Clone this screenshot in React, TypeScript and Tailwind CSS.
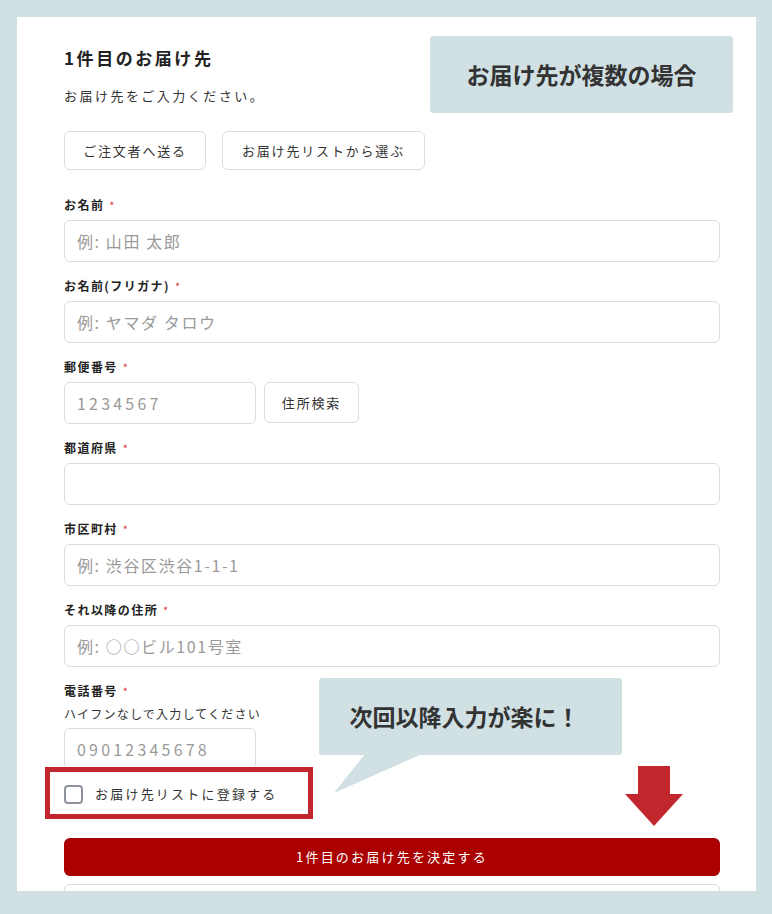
import React from "react";

const font = { fontFamily: '"Noto Sans CJK JP", "Noto Sans", sans-serif' };

function Label({ text }: { text: string }) {
  return (
    <div className="flex items-center h-[18px] text-[12px] font-bold text-[#222] tracking-[0.12em] leading-[18px]">
      <span>{text}</span>
      <span className="ml-[5px] text-[#e0393e] text-[11px] font-normal">*</span>
    </div>
  );
}

function Input({ placeholder, w, digits }: { placeholder?: string; w?: string; digits?: boolean }) {
  return (
    <div
      className={`mt-[6px] h-[42px] ${w ?? "w-full"} rounded-[6px] border border-[#dcdcdc] bg-white flex items-center px-[12px] text-[16px] ${digits ? "tracking-[0.2em]" : "tracking-[0.1em]"} text-[#9a9a9a]`}
    >
      {placeholder}
    </div>
  );
}

export default function App() {
  return (
    <div className="w-[772px] h-[914px] bg-[#d0e0e3] pt-[17px] pl-[17px] overflow-hidden" style={font}>
      <div className="relative w-[739px] h-[874px] bg-white overflow-hidden pl-[47px] pr-[36px] pt-[29px]">
        <div className="text-[17px] font-bold leading-[24px] tracking-[0.15em] text-[#222]">1件目のお届け先</div>
        <div className="mt-[16px] text-[13px] leading-[20px] tracking-[0.19em] text-[#333]">お届け先をご入力ください。</div>
        <div className="mt-[25px] flex gap-[16px]">
          <div className="h-[39px] w-[142px] rounded-[6px] border border-[#dcdcdc] flex items-center justify-center text-[13px] tracking-[0.14em] text-[#333]">
            ご注文者へ送る
          </div>
          <div className="h-[39px] w-[203px] rounded-[6px] border border-[#dcdcdc] flex items-center justify-center text-[13px] tracking-[0.14em] text-[#333]">
            お届け先リストから選ぶ
          </div>
        </div>

        <div className="mt-[26px] flex flex-col gap-[15px]">
          <div>
            <Label text="お名前" />
            <Input placeholder="例: 山田 太郎" />
          </div>
          <div>
            <Label text="お名前(フリガナ)" />
            <Input placeholder="例: ヤマダ タロウ" />
          </div>
          <div>
            <Label text="郵便番号" />
            <div className="flex gap-[8px] items-start">
              <Input placeholder="1234567" w="w-[192px]" digits />
              <div className="mt-[6px] h-[41px] w-[95px] rounded-[6px] border border-[#dcdcdc] flex items-center justify-center text-[13px] tracking-[0.14em] text-[#333]">
                住所検索
              </div>
            </div>
          </div>
          <div>
            <Label text="都道府県" />
            <Input />
          </div>
          <div>
            <Label text="市区町村" />
            <Input placeholder="例: 渋谷区渋谷1-1-1" />
          </div>
          <div>
            <Label text="それ以降の住所" />
            <Input placeholder="例: ○○ビル101号室" />
          </div>
          <div>
            <Label text="電話番号" />
            <div className="mt-[5px] h-[18px] leading-[18px] text-[12px] tracking-[0.1em] text-[#333]">ハイフンなしで入力してください</div>
            <div className="-mt-[1px]">
              <Input placeholder="09012345678" w="w-[192px]" digits />
            </div>
          </div>
        </div>

        <div className="relative mt-[4px] h-[40px] flex items-center gap-[12px]">
          <div className="w-[19px] h-[19px] rounded-[4px] border-2 border-[#8d939c] bg-white" />
          <span className="text-[13px] tracking-[0.17em] text-[#333]">お届け先リストに登録する</span>
          <div className="absolute left-[-19px] top-[-7px] w-[268px] h-[52px] border-[5px] border-[#c1272d]" />
        </div>

        <div className="mt-[24px] h-[38px] rounded-[6px] bg-[#aa0000] flex items-center justify-center text-[13px] tracking-[0.17em] text-white">
          1件目のお届け先を決定する
        </div>
        <div className="mt-[8px] h-[42px] rounded-[6px] border border-[#dcdcdc]" />

        <div className="absolute left-[413px] top-[19px] w-[303px] h-[77px] rounded-[3px] bg-[#d0e0e3] flex items-center justify-center text-[23px] font-bold text-[#333]">
          お届け先が複数の場合
        </div>

        <div className="absolute left-[302px] top-[661px] w-[303px] h-[77px] rounded-[3px] bg-[#d0e0e3] flex items-center justify-center pr-[12px] text-[23px] font-bold text-[#333]">
          次回以降入力が楽に！
        </div>
        <svg className="absolute left-[310px] top-[737px]" width="100" height="40" viewBox="0 0 100 40">
          <polygon points="38,0 95,0 7,39" fill="#d0e0e3" />
        </svg>

        <svg className="absolute left-[608px] top-[749px]" width="58" height="61" viewBox="0 0 58 61">
          <polygon points="13,0 45,0 45,28 58,28 29,60 0,28 13,28" fill="#c1272d" strokeLinejoin="round" />
        </svg>
      </div>
    </div>
  );
}
